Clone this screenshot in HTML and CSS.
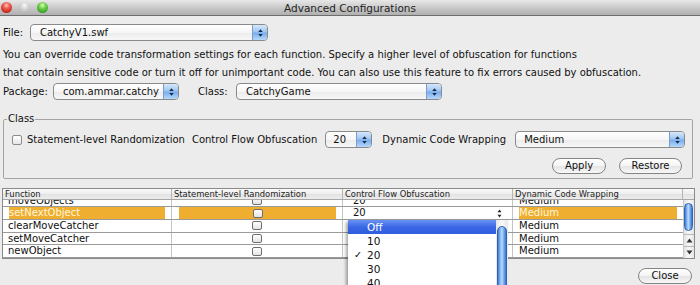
FILE: index.html
```html
<!DOCTYPE html>
<html>
<head>
<meta charset="utf-8">
<link rel="stylesheet" href="styles.css">
</head>
<body>
<div class="window">
  <div class="titlebar">
    <div class="lights"><span class="light red"></span><span class="light gray"></span><span class="light green"></span></div>
    <div class="title">Advanced Configurations</div>
    <div></div>
  </div>
  <div class="content">
    <div class="row file-row">
      <span class="lbl lbl-file">File:</span>
      <div class="select sel-file"><span class="sel-text">CatchyV1.swf</span><span class="arrows"><svg viewBox="0 0 7 10" width="7" height="10"><path d="M3.5 1.2L5.8 4H1.2Z M1.2 6H5.8L3.5 8.8Z" fill="#1c2c48"/></svg></span></div>
    </div>
    <p class="desc">You can override code transformation settings for each function. Specify a higher level of obfuscation for functions<br>that contain sensitive code or turn it off for unimportant code. You can also use this feature to fix errors caused by obfuscation.</p>
    <div class="row pkg-row">
      <span class="lbl lbl-pkg">Package:</span>
      <div class="select sel-pkg"><span class="sel-text">com.ammar.catchy</span><span class="arrows"><svg viewBox="0 0 7 10" width="7" height="10"><path d="M3.5 1.2L5.8 4H1.2Z M1.2 6H5.8L3.5 8.8Z" fill="#1c2c48"/></svg></span></div>
      <span class="lbl lbl-class">Class:</span>
      <div class="select sel-class"><span class="sel-text">CatchyGame</span><span class="arrows"><svg viewBox="0 0 7 10" width="7" height="10"><path d="M3.5 1.2L5.8 4H1.2Z M1.2 6H5.8L3.5 8.8Z" fill="#1c2c48"/></svg></span></div>
    </div>
    <fieldset class="group">
      <legend>Class</legend>
      <div class="class-row">
        <span class="check"></span>
        <span class="opt opt-stmt">Statement-level Randomization</span>
        <span class="opt opt-cf">Control Flow Obfuscation</span>
        <div class="select sel-cf"><span class="sel-text">20</span><span class="arrows"><svg viewBox="0 0 7 10" width="7" height="10"><path d="M3.5 1.2L5.8 4H1.2Z M1.2 6H5.8L3.5 8.8Z" fill="#1c2c48"/></svg></span></div>
        <span class="opt opt-dyn">Dynamic Code Wrapping</span>
        <div class="select sel-dyn"><span class="sel-text">Medium</span><span class="arrows"><svg viewBox="0 0 7 10" width="7" height="10"><path d="M3.5 1.2L5.8 4H1.2Z M1.2 6H5.8L3.5 8.8Z" fill="#1c2c48"/></svg></span></div>
      </div>
      <div class="btn-row">
        <button class="btn btn-apply">Apply</button>
        <button class="btn btn-restore">Restore</button>
      </div>
    </fieldset>
    <div class="table">
      <div class="thead">
        <div class="th">Function</div>
        <div class="th">Statement-level Randomization</div>
        <div class="th">Control Flow Obfuscation</div>
        <div class="th">Dynamic Code Wrapping</div>
        <div class="th th-corner"></div>
      </div>
      <div class="tbody">
        <div class="rows">
          <div class="tr first">
            <div class="td">moveObjects</div>
            <div class="td td-check"><span class="cb"></span></div>
            <div class="td td-cf">20</div>
            <div class="td td-dyn">Medium</div>
          </div>
          <div class="tr sel">
            <div class="td"><span class="hl">setNextObject</span></div>
            <div class="td td-check"><span class="hl hl-c"><span class="cb"></span></span></div>
            <div class="td td-cf td-edit"><span>20</span><svg viewBox="0 0 5 9" width="5" height="9"><path d="M2.5 0.5L4.5 3.3H0.5Z M0.5 5.7H4.5L2.5 8.5Z" fill="#222"/></svg></div>
            <div class="td td-dyn"><span class="hl">Medium</span></div>
          </div>
          <div class="tr">
            <div class="td">clearMoveCatcher</div>
            <div class="td td-check"><span class="cb"></span></div>
            <div class="td td-cf"></div>
            <div class="td td-dyn">Medium</div>
          </div>
          <div class="tr">
            <div class="td">setMoveCatcher</div>
            <div class="td td-check"><span class="cb"></span></div>
            <div class="td td-cf"></div>
            <div class="td td-dyn">Medium</div>
          </div>
          <div class="tr">
            <div class="td">newObject</div>
            <div class="td td-check"><span class="cb"></span></div>
            <div class="td td-cf"></div>
            <div class="td td-dyn">Medium</div>
          </div>
        </div>
        <div class="vscroll">
          <div class="vtrack"><div class="vthumb"></div></div>
          <div class="varrow"><svg viewBox="0 0 7 5" width="7" height="5"><path d="M3.5 0.5L6.5 4.5H0.5Z" fill="#333"/></svg></div>
          <div class="varrow"><svg viewBox="0 0 7 5" width="7" height="5"><path d="M0.5 0.5H6.5L3.5 4.5Z" fill="#333"/></svg></div>
        </div>
      </div>
    </div>
    <div class="footer">
      <button class="btn btn-close">Close</button>
    </div>
  </div>
  <div class="popup">
    <div class="plist">
      <div class="pitem active"><span class="tick"></span>Off</div>
      <div class="pitem"><span class="tick"></span>10</div>
      <div class="pitem checked"><span class="tick">✓</span>20</div>
      <div class="pitem"><span class="tick"></span>30</div>
      <div class="pitem"><span class="tick"></span>40</div>
    </div>
    <div class="pscroll"><div class="pthumb"></div></div>
  </div>
</div>
</body>
</html>
```

FILE: styles.css
```css
* { box-sizing: border-box; }
html, body { margin: 0; padding: 0; }
body {
  width: 700px;
  height: 285px;
  overflow: hidden;
  background: #ececec;
  font-family: "DejaVu Sans", "Liberation Sans", sans-serif;
  font-size: 10px;
  color: #111;
}
.window { position: relative; width: 700px; height: 285px; overflow: hidden; }

/* title bar */
.titlebar {
  height: 16px;
  display: grid;
  grid-template-columns: 1fr auto 1fr;
  align-items: center;
  background: linear-gradient(#e8e8e8, #c4c4c4 60%, #b0b0b0);
  border-bottom: 1px solid #6e6e6e;
}
.lights { display: flex; gap: 7px; padding-left: 1px; margin-top: -1px; }
.light { width: 11px; height: 11px; border-radius: 50%; display: block; }
.red { background: radial-gradient(circle at 50% 30%, #ffc4bc 0, #ec5a4e 35%, #c9261c 75%, #9a1a12 100%); }
.gray { background: radial-gradient(circle at 50% 30%, #fafafa 0, #d4d4d4 40%, #b6b6b6 80%, #a0a0a0 100%); }
.green { background: radial-gradient(circle at 50% 30%, #dcffc0 0, #6fd24a 35%, #3aa12a 75%, #2a7d1c 100%); }
.title { font-size: 10.5px; color: #1e1e1e; white-space: nowrap; }

.content { padding-left: 3px; }

.row { display: flex; align-items: center; height: 17px; }
.file-row { margin-top: 8px; }
.lbl { flex: none; white-space: nowrap; }
.lbl-file { width: 27px; }
.lbl-pkg { width: 50px; }
.lbl-class { width: 38px; margin-left: 19px; }

.select {
  flex: none;
  height: 17px;
  display: flex;
  align-items: stretch;
  border: 1px solid #8a8a8a;
  border-radius: 4px;
  background: linear-gradient(#ffffff, #f6f6f6 50%, #ebebeb 51%, #f7f7f7);
  overflow: hidden;
}
.sel-text { flex: 1; padding-left: 9px; line-height: 15px; white-space: nowrap; overflow: hidden; }
.arrows {
  flex: none;
  width: 15px;
  display: flex;
  align-items: center;
  justify-content: center;
  border-left: 1px solid #7e9cc8;
  background: linear-gradient(#d6e8fc, #9cc4f2 48%, #76abec 52%, #b6d8fc);
}
.sel-file { width: 238px; }
.sel-pkg { width: 126px; }
.sel-class { width: 206px; }
.sel-cf { width: 47px; margin-left: 8px; }
.sel-dyn { width: 170px; margin-left: 9px; }
.sel-cf .sel-text { padding-left: 7px; }
.sel-dyn .sel-text { padding-left: 8px; }

.desc { margin: 5px 0 0; line-height: 18px; white-space: nowrap; }
.pkg-row { margin-top: 1px; }

/* group box */
.group {
  margin: 14px 0 0;
  width: 690px;
  border: 1px solid #a4a4a4;
  border-radius: 2px;
  padding: 7px 9px 4px 3px;
  min-width: 0;
}
.group legend { padding: 0 1px; line-height: 10px; font-size: 10px; }
.class-row { display: flex; align-items: center; height: 17px; padding-left: 5px; }
.check {
  flex: none;
  width: 10px; height: 10px;
  border: 1px solid #8c8c8c;
  border-radius: 2px;
  background: linear-gradient(#ffffff, #e6e6e6);
  display: block;
}
.opt { flex: none; white-space: nowrap; }
.opt-stmt { margin-left: 5px; }
.opt-cf { margin-left: 7px; }
.opt-dyn { margin-left: 10px; }
.btn-row { display: flex; justify-content: flex-end; gap: 13px; margin-top: 10px; height: 16px; padding-right: 1px; }

.btn {
  font-family: inherit;
  font-size: 10px;
  color: #111;
  height: 16px;
  padding: 0;
  border: 1px solid #858585;
  border-radius: 8px;
  background: linear-gradient(#ffffff, #f4f4f4 50%, #e4e4e4 51%, #f8f8f8);
  line-height: 14px;
}
.btn-apply { width: 54px; }
.btn-restore { width: 63px; }
.btn-close { width: 54px; }

/* table */
.table {
  margin: 9px 0 0 -1px;
  width: 693px;
  border: 1px solid #8a8a8a;
  background: #fff;
}
.thead {
  display: grid;
  grid-template-columns: 169px 171px 170px 170px 11px;
  height: 11px;
  border-bottom: 1px solid #a8a8a8;
  background: linear-gradient(#fafafa, #eeeeee 50%, #e2e2e2 51%, #ececec);
}
.th {
  font-size: 8.4px;
  line-height: 10px;
  padding-left: 2px;
  border-right: 1px solid #b4b4b4;
  white-space: nowrap;
  overflow: hidden;
  color: #222;
}
.th-corner { border-right: 0; }
.tbody {
  display: grid;
  grid-template-columns: 680px 11px;
  height: 58px;
  overflow: hidden;
}
.rows { overflow: hidden; }
.tr {
  display: grid;
  grid-template-columns: 169px 171px 170px 170px;
  height: 12.67px;
  border-bottom: 1px solid #9a9a9a;
}
.tr.first { margin-top: -5.37px; }
.td {
  border-right: 1px solid #c4c4c4;
  padding-left: 5px;
  line-height: 11.67px;
  font-size: 10px;
  white-space: nowrap;
  overflow: hidden;
  color: #111;
}
.td-check { display: flex; justify-content: center; align-items: center; padding-left: 0; }
.td-cf { padding-left: 10px; }
.td-dyn { padding-left: 6px; border-right: 0; }
.tr.sel .td { padding-left: 6px; padding-right: 6px; }
.tr.sel .td-check { padding-left: 7px; padding-right: 6px; }
.tr.sel .td-edit { padding-left: 10px; padding-right: 10px; display: flex; justify-content: space-between; align-items: center; }
.hl {
  display: block;
  height: 100%;
  background: #efae2f;
  color: #fff6dc;
}
.hl-c { width: 100%; display: flex; justify-content: center; align-items: center; }
.cb {
  width: 10px; height: 9px;
  border: 1px solid #6e6e6e;
  border-radius: 2px;
  background: linear-gradient(#ffffff, #e4e4e4);
  display: block;
}

.vscroll {
  display: flex;
  flex-direction: column;
  border-left: 1px solid #c8c8c8;
  background: linear-gradient(to right, #e2e2e2, #f8f8f8 50%, #e6e6e6);
}
.vtrack { flex: 1; padding: 3px 1px 0 0; }
.vthumb {
  height: 28px;
  border-radius: 5px;
  border: 1px solid #2f63b4;
  background: linear-gradient(to right, #3f7ad6, #9cc6f6 35%, #b8d8fa 50%, #6fa6ee 75%, #3a73d0);
}
.varrow {
  height: 12px;
  display: flex;
  align-items: center;
  justify-content: center;
  border-top: 1px solid #b8b8b8;
}

.footer { display: flex; justify-content: flex-end; padding-right: 8px; margin-top: 9px; }

/* popup menu */
.popup {
  position: absolute;
  left: 348px;
  top: 220px;
  width: 160px;
  height: 80px;
  background: #fff;
  box-shadow: -2px 2px 3px rgba(0,0,0,0.35);
  display: grid;
  grid-template-columns: 1fr 12px;
}
.plist { overflow: hidden; }
.pitem {
  height: 14px;
  line-height: 14px;
  padding-left: 6px;
  font-size: 10.5px;
  color: #111;
  display: flex;
}
.pitem.active {
  background: linear-gradient(#6a93f4, #3b67e6 50%, #2f5ddc);
  color: #fff;
}
.tick { display: block; width: 13px; flex: none; font-size: 9.5px; }
.pscroll {
  background: linear-gradient(to right, #e4e4e4, #fafafa 50%, #e8e8e8);
  padding: 6px 1px 0 1px;
}
.pthumb {
  height: 80px;
  border-radius: 5px;
  border: 1px solid #2f63b4;
  background: linear-gradient(to right, #3f7ad6, #9cc6f6 35%, #b8d8fa 50%, #6fa6ee 75%, #3a73d0);
}
```
